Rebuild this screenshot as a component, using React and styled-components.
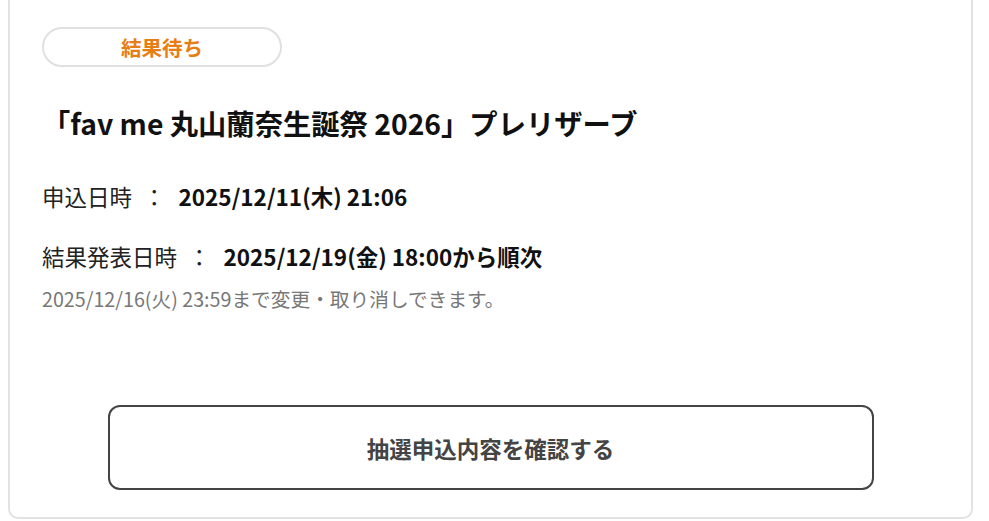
import React from "react";
import styled, { createGlobalStyle } from "styled-components";

const Global = createGlobalStyle`
  html, body { margin: 0; padding: 0; background: #fff; }
  body { font-family: "Noto Sans CJK JP", "Noto Sans", sans-serif; color: #111; }
  * { box-sizing: border-box; }
`;

const Page = styled.div`
  padding: 0 16px 2px 8px;
  height: 521px;
  overflow: hidden;
`;

const Card = styled.div`
  margin-top: -8px;
  height: 527px;
  border: 2px solid #e2e2e2;
  border-radius: 10px;
  background: #fff;
  padding: 33px 32px 0 32px;
  display: flex;
  flex-direction: column;
`;

const Badge = styled.div`
  width: 240px;
  height: 40px;
  border: 2px solid #e0e0e0;
  border-radius: 20px;
  display: flex;
  align-items: center;
  justify-content: center;
  color: #e67e14;
  font-weight: 700;
  font-size: 20.5px;
`;

const Title = styled.h2`
  margin: 38px 0 0 0;
  font-size: 28.3px;
  line-height: 36px;
  font-weight: 700;
  color: #111;
`;

const Row = styled.div`
  display: flex;
  align-items: baseline;
  margin-top: ${(p) => p.$mt}px;
  font-size: 22.5px;
  line-height: 32px;
`;

const Label = styled.span`
  font-weight: 400;
  color: #222;
`;

const Colon = styled.span`
  margin: 0 13px 0 11px;
  color: #222;
`;

const Value = styled.span`
  font-weight: 700;
  color: #111;
`;

const Note = styled.div`
  margin-top: 13px;
  font-size: 19.7px;
  line-height: 28px;
  color: #777;
`;

const Button = styled.button`
  align-self: center;
  margin-top: 92px;
  width: 766px;
  height: 85px;
  border: 2px solid #444;
  border-radius: 12px;
  background: #fff;
  font-family: inherit;
  font-size: 22.5px;
  font-weight: 700;
  color: #444;
  cursor: pointer;
`;

export default function App() {
  return (
    <>
      <Global />
      <Page>
        <Card>
          <Badge>結果待ち</Badge>
          <Title>「fav me 丸山蘭奈生誕祭 2026」プレリザーブ</Title>
          <Row $mt={39}>
            <Label>申込日時</Label>
            <Colon>：</Colon>
            <Value>2025/12/11(木) 21:06</Value>
          </Row>
          <Row $mt={28}>
            <Label>結果発表日時</Label>
            <Colon>：</Colon>
            <Value>2025/12/19(金) 18:00から順次</Value>
          </Row>
          <Note>2025/12/16(火) 23:59まで変更・取り消しできます。</Note>
          <Button>抽選申込内容を確認する</Button>
        </Card>
      </Page>
    </>
  );
}
